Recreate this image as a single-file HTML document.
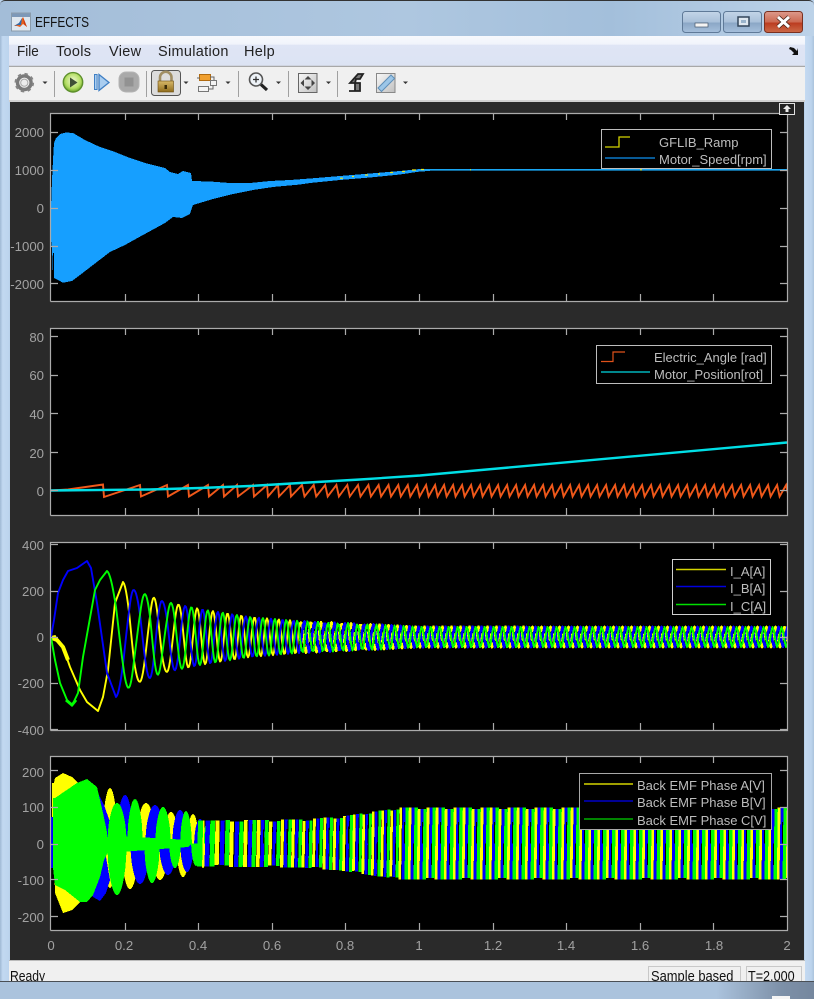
<!DOCTYPE html>
<html><head><meta charset="utf-8"><title>EFFECTS</title>
<style>
html,body{margin:0;padding:0;background:#abc3dd}
#w{position:relative;width:814px;height:999px;overflow:hidden;font-family:"Liberation Sans",sans-serif;background:#b9d1ea}
#w>div{position:absolute}
.t{position:absolute;white-space:nowrap;line-height:16px}
.m{font-size:14.5px;color:#222;top:44px;letter-spacing:.3px}
.s{font-size:15px;color:#111;top:8px;transform-origin:0 0}
.yl,.xl{position:absolute;color:#a2a2a2;font-size:13.2px;line-height:16px}
.yl{right:770px;text-align:right}
.xl{top:938px;width:40px;text-align:center}
.lg{position:absolute;color:#bdbdbd;font-size:13px;line-height:16px;white-space:nowrap}
svg{position:absolute;left:0;top:0}
</style></head><body><div id="w">
<div style="left:0;top:0;width:814px;height:36px;background:linear-gradient(90deg,#a3bdd8,#aec7e0 50%,#a3bfdb 75%,#bcd2e8);border-top:1px solid #333;box-sizing:border-box;border-radius:5px 5px 0 0"></div>
<div style="left:0;top:36px;width:9px;height:945px;background:linear-gradient(90deg,#9fb9d4,#c2d8f0 30%,#bcd4ee)"></div>
<div style="left:805px;top:36px;width:9px;height:945px;background:linear-gradient(90deg,#c4daf2,#bcd3ec 70%,#aac3dc)"></div>
<div style="left:9px;top:36px;width:796px;height:31px;background:linear-gradient(180deg,#f7f9fd 0,#f1f4fb 26%,#dfe5f5 30%,#dce3f3 95%,#a8a8a8 97%)"></div>
<div style="left:9px;top:67px;width:796px;height:35px;background:#f0f0f0;border-bottom:2px solid #d0d0d0;box-sizing:border-box"></div>
<div style="left:10px;top:102px;width:794px;height:858px;background:#2a2a2a"></div>
<div style="left:9px;top:960px;width:796px;height:21px;background:#f0f0f0;border-top:1px solid #bbb;box-sizing:border-box;overflow:hidden">
<span class="t s" style="left:1px;transform:scaleX(.81)">Ready</span>
<span style="position:absolute;left:639px;top:5px;width:93px;height:20px;border:1px solid #c8c8c8;box-sizing:border-box"></span>
<span style="position:absolute;left:737px;top:5px;width:56px;height:20px;border:1px solid #c8c8c8;box-sizing:border-box"></span>
<span class="t s" style="left:642px;transform:scaleX(.86)">Sample based</span>
<span class="t s" style="left:739px;transform:scaleX(.84)">T=2.000</span>
</div>
<div style="left:0;top:981px;width:814px;height:18px;background:linear-gradient(90deg,#abc3dd 0,#abc3dd 88%,#7d90a8 96%,#75879e);border-top:1px solid #4a4f55;box-sizing:border-box"></div>
<div style="left:772px;top:996px;width:18px;height:3px;background:#f4f4f4"></div>

<span class="t" style="left:35px;top:15px;font-size:15px;color:#111;transform:scaleX(.79);transform-origin:0 0">EFFECTS</span>
<span class="t m" style="left:17px;letter-spacing:0;transform:scaleX(.93);transform-origin:0 0">File</span>
<span class="t m" style="left:56px">Tools</span>
<span class="t m" style="left:109px">View</span>
<span class="t m" style="left:158px">Simulation</span>
<span class="t m" style="left:244px">Help</span>

<svg width="814" height="999" viewBox="0 0 814 999">
<defs>
<clipPath id="c1"><rect x="51" y="113" width="736" height="188"/></clipPath>
<clipPath id="c2"><rect x="51" y="328" width="736" height="187"/></clipPath>
<clipPath id="c3"><rect x="51" y="542" width="736" height="188"/></clipPath>
<clipPath id="c4"><rect x="51" y="756" width="736" height="174"/></clipPath>
<linearGradient id="gmin" x1="0" y1="0" x2="0" y2="1"><stop offset="0" stop-color="#c3d5e8"/><stop offset=".5" stop-color="#a9c0d9"/><stop offset=".55" stop-color="#8ba7c6"/><stop offset="1" stop-color="#a6c0dc"/></linearGradient>
<linearGradient id="gcl" x1="0" y1="0" x2="0" y2="1"><stop offset="0" stop-color="#dd9a8c"/><stop offset=".5" stop-color="#cc6a52"/><stop offset=".55" stop-color="#bb3c20"/><stop offset="1" stop-color="#cc6a48"/></linearGradient>
<radialGradient id="gp" cx=".5" cy=".42" r=".6"><stop offset="0" stop-color="#eef8d0"/><stop offset=".65" stop-color="#b4de64"/><stop offset="1" stop-color="#5f9c20"/></radialGradient>
<linearGradient id="gl" x1="0" y1="0" x2="0" y2="1"><stop offset="0" stop-color="#d8b868"/><stop offset="1" stop-color="#8f6c1c"/></linearGradient>
<linearGradient id="gf" x1="0" y1="0" x2="1" y2="1"><stop offset="0" stop-color="#f8f8f8"/><stop offset="1" stop-color="#c0c0c0"/></linearGradient>
</defs>

<!-- window buttons -->
<rect x="682.500" y="11.500" width="38" height="21" rx="3" fill="url(#gmin)" stroke="#5f7a98"/>
<rect x="695" y="23" width="13" height="4" fill="#f4f4f4" stroke="#44566a" stroke-width=".7"/>
<rect x="723.500" y="11.500" width="38" height="21" rx="3" fill="url(#gmin)" stroke="#5f7a98"/>
<rect x="738" y="17" width="11" height="9" fill="#dfe8f0" stroke="#33465a" stroke-width="1.500"/>
<rect x="741" y="20" width="5" height="3" fill="#9ab4cc"/>
<rect x="764.500" y="11.500" width="38" height="21" rx="3" fill="url(#gcl)" stroke="#7a3020"/>
<path d="M778 17l11 10M789 17l-11 10" stroke="#3a1a10" stroke-width="4.400"/>
<path d="M778 17l11 10M789 17l-11 10" stroke="#fff" stroke-width="3"/>

<!-- matlab icon -->
<rect x="11.500" y="13" width="19" height="18" fill="#dfe7ef" stroke="#8a9bab"/>
<rect x="12" y="13.500" width="18" height="3.500" fill="#7d98b8"/>
<path d="M14 26l5-3 4-6 4 10-4-3-3 3-3-1z" fill="#e8601c"/>
<path d="M14 26l5-3 3-5-1 7-3 0z" fill="#2a6cb0"/>
<path d="M23 17l4 10-3-3z" fill="#c83a14"/>

<!-- menu arrow -->
<path d="M790 47l4 1 3 3 1-3v7h-6l2-2-3-3-2-1z" fill="#111"/>

<!-- toolbar separators -->
<path d="M54.500 71v26M146.500 71v26M238.500 71v26M288.500 71v26M337.500 71v26" stroke="#a0a0a0"/>
<!-- dropdown arrows -->
<g fill="#333"><path d="M42.500 81.500h5l-2.500 2.500zM183.500 81.500h5l-2.500 2.500zM225.500 81.500h5l-2.500 2.500zM276 81.500h5l-2.500 2.500zM326 81.500h5l-2.500 2.500zM403 81.500h5l-2.500 2.500z"/></g>
<!-- gear -->
<circle cx="24.300" cy="82.700" r="6.800" fill="none" stroke="#7a7a7a" stroke-width="3.400"/>
<circle cx="24.300" cy="82.700" r="8.800" fill="none" stroke="#858585" stroke-width="2" stroke-dasharray="3.400 3.500"/>
<circle cx="24.300" cy="82.700" r="3.600" fill="#ececec" stroke="#a8a8a8"/>
<!-- play -->
<circle cx="73" cy="82.300" r="9.700" fill="url(#gp)" stroke="#5d8f2c" stroke-width="1.400"/>
<path d="M70 77.500l7.500 5-7.500 5z" fill="#3f4f36"/>
<!-- step -->
<path d="M94.500 74.500h2.600v15h-2.600z" fill="#a9cdf0" stroke="#3f7fc4"/>
<path d="M99 74.500l10 8-10 8z" fill="#a9cdf0" stroke="#3f7fc4" stroke-width="1.300"/>
<!-- stop -->
<rect x="119" y="72" width="20" height="20" rx="7" fill="#a9a9a9" stroke="#b5b5b5"/>
<rect x="124.500" y="77.500" width="9" height="9" fill="#929292"/>
<!-- lock -->
<rect x="151.500" y="70.500" width="29" height="25" rx="3" fill="#dcdcdc" stroke="#555"/>
<path d="M160 81v-3.500a5.500 5.500 0 0 1 11.500 0V81" fill="none" stroke="#a08e64" stroke-width="2.600"/>
<rect x="158" y="81" width="15.500" height="11" fill="url(#gl)" stroke="#6a4c10" stroke-width=".6"/>
<rect x="164.500" y="85" width="2.500" height="4" fill="#3a2a08"/>
<!-- block icon -->
<rect x="199.500" y="74.500" width="11" height="6" fill="#f0a030" stroke="#b06a10"/>
<rect x="198.500" y="86.500" width="10" height="5" fill="#f4f4f4" stroke="#777"/>
<rect x="210.500" y="80.500" width="6" height="5" fill="#f4f4f4" stroke="#777"/>
<path d="M210 77h4v3M208 89h5v-4M200 78h-3" stroke="#666" fill="none"/>
<!-- zoom -->
<circle cx="256" cy="79.500" r="6.500" fill="#eef3f8" stroke="#555" stroke-width="1.600"/>
<path d="M253 79.500h6M256 76.500v6" stroke="#333" stroke-width="1.300"/>
<path d="M261 84.500l6 5.500" stroke="#222" stroke-width="3.200"/>
<!-- fit -->
<rect x="298.500" y="73.500" width="18.500" height="19" fill="url(#gf)" stroke="#666"/>
<path d="M308 76l3.500 3.500h-7zM308 90l3.500-3.500h-7zM300.500 83l3.500-3.500v7zM315 83l-3.500-3.500v7z" fill="#444"/>
<!-- signal step -->
<path d="M349 91h6v-8h-5l8-9h5l-3 5h-4l-1 4h5v8h-11" fill="#777" stroke="#222" stroke-width="1.800"/>
<!-- ruler -->
<rect x="376.500" y="73.500" width="18.500" height="19" fill="url(#gf)" stroke="#888"/>
<path d="M378 88l13-13 3.500 3.500-13 13z" fill="#9cc6e8" stroke="#5f8fb8"/>

<!-- plots -->
<rect x="51" y="113" width="736" height="188" fill="#000"/>
<rect x="51" y="328" width="736" height="187" fill="#000"/>
<rect x="51" y="542" width="736" height="188" fill="#000"/>
<rect x="51" y="756" width="736" height="174" fill="#000"/>

<g clip-path="url(#c1)">
<path fill="#169fff" shape-rendering="crispEdges" d="M51 208L52 180L53 160L54 143L56 138L60 134L66 132.500L73 133L85 140L100 147L115 152L130 158L145 163L165 168L170 172L178 174L183 171L191 173L192 181L210 181.500L230 183L250 183L270 181L290 180L310 178.500L340 176L370 173.500L400 171L420 169L430 169L430 171L420 171.500L400 174.500L370 177.500L340 180L310 183L300 184.500L273 187L253 190L233 194L213 199L193 205L190 214L182 218L173 217L165 223L143 235L125 245L110 252L93 265L80 275L72 281L63 282.700L58 280L54 278L54 253L53 253L53 277L52 248L51 240Z"/>
<path d="M420 169.800H787" stroke="#1aa6f2" stroke-width="1.600"/>
<path d="M340 178.200h3M352 176.500h2M365 175h3M378 174h2M390 172.500h3M402 171.500h3M412 170h4M421 169.500h3M470 169.800h1M640 169.800h2" stroke="#e8e820" stroke-width="1.200"/>
</g>
<path id="saw" clip-path="url(#c2)" fill="none" stroke="#f0581a" stroke-width="1.900"/>
<path clip-path="url(#c2)" fill="none" stroke="#00dfe6" stroke-width="2.400" d="M51 490.500L150 489.500L200 488L250 486L300 483L360 479.500L420 475.500L787 442.500"/>
<g id="p3" clip-path="url(#c3)" fill="none" stroke-linejoin="round"></g>
<g id="p4" clip-path="url(#c4)"></g>
<g id="axes" fill="none" stroke="#a8a8a8"></g>

<!-- legends -->
<rect x="601.500" y="129.500" width="170" height="39" fill="#000" stroke="#bdbdbd"/>
<path d="M605 147h14v-10h11" fill="none" stroke="#d4d400" stroke-width="1.300"/>
<path d="M605 158h50" stroke="#0a78c8" stroke-width="1.400"/>
<rect x="596.500" y="345.500" width="175" height="38" fill="#000" stroke="#bdbdbd"/>
<path d="M601 361.500h12v-9.500h12" fill="none" stroke="#e0521a" stroke-width="1.200"/>
<path d="M601 372h49" stroke="#00d8e0" stroke-width="1.300"/>
<rect x="672.500" y="559.500" width="98" height="55" fill="#000" stroke="#d0d0d0"/>
<path d="M676 569.500h50" stroke="#d4d400" stroke-width="1.400"/>
<path d="M676 586.500h50" stroke="#0000e0" stroke-width="1.400"/>
<path d="M676 604.500h50" stroke="#00e000" stroke-width="1.400"/>
<rect x="579.500" y="773.500" width="192" height="56" fill="#000" stroke="#a8a8a8"/>
<path d="M584 784h49" stroke="#d4d400" stroke-width="1.400"/>
<path d="M584 801h49" stroke="#0000c8" stroke-width="1.400"/>
<path d="M584 819h49" stroke="#00b000" stroke-width="1.400"/>

<rect x="779.500" y="103.500" width="15" height="11" fill="#222" stroke="#e0e0e0"/>
<path d="M787 105l4 4h-2.500v3h-3v-3H783z" fill="#e8e8e8"/>
</svg>

<span class="lg" style="left:659px;top:135px">GFLIB_Ramp</span>
<span class="lg" style="left:659px;top:152px">Motor_Speed[rpm]</span>
<span class="lg" style="left:654px;top:350px">Electric_Angle [rad]</span>
<span class="lg" style="left:654px;top:367px">Motor_Position[rot]</span>
<span class="lg" style="left:730px;top:564px">I_A[A]</span>
<span class="lg" style="left:730px;top:581px">I_B[A]</span>
<span class="lg" style="left:730px;top:599px">I_C[A]</span>
<span class="lg" style="left:637px;top:778px">Back EMF Phase A[V]</span>
<span class="lg" style="left:637px;top:795px">Back EMF Phase B[V]</span>
<span class="lg" style="left:637px;top:813px">Back EMF Phase C[V]</span>

<span class="yl" style="top:125px">2000</span><span class="yl" style="top:163px">1000</span><span class="yl" style="top:201px">0</span><span class="yl" style="top:239px">-1000</span><span class="yl" style="top:277px">-2000</span>
<span class="yl" style="top:330px">80</span><span class="yl" style="top:368px">60</span><span class="yl" style="top:407px">40</span><span class="yl" style="top:446px">20</span><span class="yl" style="top:484px">0</span>
<span class="yl" style="top:538px">400</span><span class="yl" style="top:584px">200</span><span class="yl" style="top:630px">0</span><span class="yl" style="top:676px">-200</span><span class="yl" style="top:723px">-400</span>
<span class="yl" style="top:765px">200</span><span class="yl" style="top:800px">100</span><span class="yl" style="top:837px">0</span><span class="yl" style="top:873px">-100</span><span class="yl" style="top:910px">-200</span>
<span class="xl" style="left:31px">0</span><span class="xl" style="left:104px">0.2</span><span class="xl" style="left:178px">0.4</span><span class="xl" style="left:252px">0.6</span><span class="xl" style="left:325px">0.8</span><span class="xl" style="left:399px">1</span><span class="xl" style="left:473px">1.2</span><span class="xl" style="left:546px">1.4</span><span class="xl" style="left:620px">1.6</span><span class="xl" style="left:694px">1.8</span><span class="xl" style="left:767px">2</span>

<script>
(function(){
var NS="http://www.w3.org/2000/svg";
function el(parent,attrs){var e=document.createElementNS(NS,"path");for(var k in attrs)e.setAttribute(k,attrs[k]);parent.appendChild(e);return e;}
function interp(t,x){if(x<=t[0][0])return t[0][1];for(var i=1;i<t.length;i++){if(x<=t[i][0]){var a=t[i-1],b=t[i];return a[1]+(b[1]-a[1])*(x-a[0])/(b[0]-a[0]);}}return t[t.length-1][1];}
/* sawtooth */
var d="M51 490.500L68 489.500L103 484.500L104 497";
var pk=[140,167,188,208,223,237,253,267,278,290];
pk.forEach(function(x){d+="L"+x+" 485L"+(x+1)+" 496.500";});
var x=290;while(x<790){var p=Math.max(9,12-(x-290)*3/130);x+=p;d+="L"+x.toFixed(1)+" 485L"+(x+2.5).toFixed(1)+" 496.500";}
document.getElementById("saw").setAttribute("d",d);
/* phase table */
var ev=[72,87,98,107,116,123,129,134,140,145,150,154,158,162,167,171];
var rt=[[171,.25],[200,.375],[250,.46],[300,.57],[400,.667],[800,.667]];
var U={};var u=15;for(var i=0;i<ev.length-1;i++){for(var q=ev[i];q<ev[i+1];q+=.5){U[q]=i+(q-ev[i])/(ev[i+1]-ev[i]);}}
for(var q2=171;q2<=800;q2+=.5){U[q2]=u;u+=interp(rt,q2)*.5;}
var k=Math.PI/3;
var Y=function(v){return -Math.cos((v-2)*k)},B=function(v){return Math.cos((v-1)*k)},G=function(v){return -Math.cos(v*k)};
/* currents */
var amp=[[98,74],[107,66],[116,60],[123,55],[134,47],[150,41],[162,36],[200,28],[250,20],[300,16],[420,10.5],[790,10]];
var p3=document.getElementById("p3");
function cur(pre,start,fn,col,sw){
 var dd=pre;for(var x=start;x<=300;x+=1){var y=637-interp(amp,x)*fn(U[x]);dd+="L"+x+" "+y.toFixed(1);}
 el(p3,{d:dd,stroke:col,"stroke-width":1.9});
 var d2="M300 "+(637-interp(amp,300)*fn(U[300])).toFixed(1);
 for(var x2=301.5;x2<=790;x2+=1.5){var y2=637-interp(amp,x2)*fn(U[x2]);d2+="L"+x2+" "+y2.toFixed(1);}
 el(p3,{d:d2,stroke:col,"stroke-width":sw,"shape-rendering":"crispEdges"});}
cur("M51 637L55 636L57 640L63 647L70 667L80 690L87 702L98 711L103 697L108 670L115 603",123,Y,"#ffff00",2.6);
el(p3,{d:"M52 638L57 640L63 647L68 660",stroke:"#ffff00","stroke-width":4});
cur("M51 637L54 620L58 593L63 580L68 571L77 568L87 561L91 568L97 603L107 673",116,B,"#0000ff",2.6);
cur("M51 637L55 660L60 683L67 700L72 705.700L78 693L83 657L95 590L100 580",107,G,"#00ff00",2);
el(p3,{d:"M66 700L72 705L76 700",stroke:"#00ff00","stroke-width":3,fill:"none"});
/* back emf */
var p4=document.getElementById("p4"),C=843.5;
function poly(col,s){el(p4,{d:s,fill:col,"shape-rendering":"crispEdges"});}
function lobe(xc,ext,w){var dy=ext-C;return "M"+(xc-w)+" "+C+"L"+(xc-w*.85).toFixed(1)+" "+(C+dy*.45).toFixed(1)+"C"+(xc-w*.6).toFixed(1)+" "+(C+dy*.85).toFixed(1)+" "+(xc-w*.3).toFixed(1)+" "+ext+" "+xc+" "+ext+"C"+(xc+w*.3).toFixed(1)+" "+ext+" "+(xc+w*.6).toFixed(1)+" "+(C+dy*.85).toFixed(1)+" "+(xc+w*.85).toFixed(1)+" "+(C+dy*.45).toFixed(1)+"L"+(xc+w)+" "+C+"Z";}
function lobes(col,a){poly(col,a.map(function(l){return lobe(l[0],l[1],l[2]);}).join(""));}
poly("#ffff00","M52 843V783H54L55 778L63 773L72 777L78 783L80 843L80 902L72 910L63 913L55 893L54 860H52Z");
lobes("#ffff00",[[110,788,8],[146,803,10],[171,812,8],[193,814,6],[110,888,7],[130,889,9],[160,880,9],[183,877,7],[203,868,4]]);
poly("#0000ff","M51 843V817H53L56 800L98 793L104 805L110 822L106 857L110 880L106 893L100 901L93 897L80 880L56 870L53 868H51Z");
lobes("#0000ff",[[125,795,9],[155,805,10],[180,810,8],[200,819,6],[140,884,10],[168,875,9],[187,872,7]]);
poly("#00ff00","M53 843V798L55 798L77 783L87 779L97 787L103 813L107 832L108 852L104 860L100 877L93 895L87 902L80 902L65 890L55 885L53 868Z");
lobes("#00ff00",[[117,803,10],[135,799,8],[163,807,8],[186,811,6],[208,821,5],[117,895,10],[152,883,8],[175,868,6],[196,866,5]]);
poly("#00ff00","M105 843L120 836L188 840L192 843L188 847L120 852Z");
var env=[[200,23],[300,24],[340,27],[400,36],[800,36]];
/* stripes: one slanted bar per electrical period for each phase */
function xAt(t){for(var q=198;q<=795;q+=.5){if(U[q]>=t)return q;}return null;}
function stripes(off,wid,col,skew){
 var s="";var n=Math.floor(U[198]/6)-1;
 for(;;n++){var xx=xAt(n*6+off);if(xx===null)break;
  var per=6/interp(rt,xx);var e=interp(env,xx),w=wid*per/9*(xx<400?.85:1),dip=(n%3==0?1.5:0);
  s+="M"+xx+" "+(C-e+dip)+"L"+(xx+w)+" "+(C-e+dip)+"L"+(xx+w+skew)+" "+(C+e-(n%4==1?1.5:0))+"L"+(xx+skew)+" "+(C+e-(n%4==1?1.5:0))+"Z";}
 poly(col,s);}
stripes(0,3,"#ffff00",-1);
stripes(2,3.1,"#0000ff",-1);
stripes(4,3.3,"#00ff00",-1);
/* thin dark specks inside the band, one per period */
var sp="";
for(var n=8;n<90;n++){var xx=xAt(n*6+3);if(xx===null)break;var e=interp(env,xx);var up=(n%2==0)?-1:1;
 sp+="M"+xx+" "+(C+up*e*.3-e*.3)+"h1v"+(e*.6)+"h-1Z";}
poly("#000000",sp);
/* axes */
var ax=document.getElementById("axes");
var P=[[113,301,[132,170,208,246,283]],[328,515,[336,375,413,452,490]],[542,730,[544,591,637,683,729]],[756,930,[770,807,844,879,916]]];
P.forEach(function(a){var s="M50.500 "+(a[1]+.5)+"V"+(a[0]+.5)+"H787.500V"+(a[1]+.5)+"H50.500";
 for(var i=1;i<=9;i++){var X=Math.round(51+i*73.6)+.5;s+="M"+X+" "+a[0]+"v7M"+X+" "+(a[1]-7)+"v7";}
 a[2].forEach(function(y){var Yp=y+.5;s+="M51 "+Yp+"h7M780 "+Yp+"h7";});
 el(ax,{d:s,stroke:"#ababab","stroke-width":1.2});});
})();
</script>
</div></body></html>
